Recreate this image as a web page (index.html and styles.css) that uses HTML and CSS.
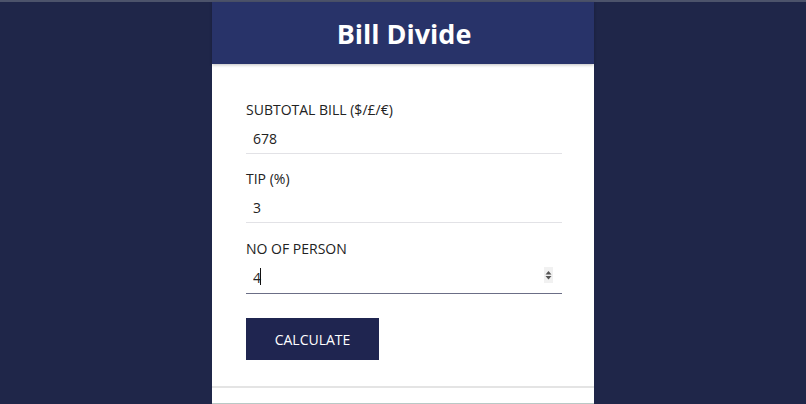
FILE: index.html
```html
<!DOCTYPE html>
<html>
<head>
<meta charset="utf-8">
<link rel="stylesheet" href="styles.css">
</head>
<body>
<div class="topline"></div>
<main class="card">
  <header class="card-head"><h1>Bill Divide</h1></header>
  <form class="card-form">
    <div class="field">
      <label>SUBTOTAL BILL ($/£/€)</label>
      <input class="inp" type="text" value="678">
    </div>
    <div class="field">
      <label>TIP (%)</label>
      <input class="inp" type="text" value="3">
    </div>
    <div class="field field-last">
      <label>NO OF PERSON</label>
      <div class="inp-wrap">
        <input class="inp focused" type="text" value="4">
        <span class="caret"></span>
        <span class="spin">
          <svg width="9" height="16" viewBox="0 0 9 16"><path d="M4.5 4 L7.5 7.5 H1.5 Z" fill="#555"/><path d="M4.5 12.5 L7.5 9 H1.5 Z" fill="#555"/></svg>
        </span>
      </div>
    </div>
    <button type="button" class="btn">CALCULATE</button>
  </form>
  <section class="result"></section>
</main>
</body>
</html>
```
FILE: styles.css
```css
html, body {
  margin: 0;
  padding: 0;
  height: 100%;
}
body {
  background: #1f2649;
  font-family: "Open Sans", "Liberation Sans", sans-serif;
  overflow: hidden;
}
.topline {
  height: 2px;
  background: #4c536b;
}
.card {
  width: 382px;
  margin: 0 auto;
  background: #fff;
  height: 402px;
  display: flex;
  flex-direction: column;
}
.card-head {
  height: 62px;
  background: #283369;
  display: flex;
  align-items: center;
  justify-content: center;
  box-shadow: 0 1px 3px rgba(0,0,0,0.25);
  position: relative;
}
.card-head h1 {
  margin: 0;
  color: #fff;
  font-size: 27px;
  font-weight: 700;
  padding-left: 2px;
}
.card-form {
  padding: 36px 32px 26px 34px;
  display: flex;
  flex-direction: column;
}
.field {
  display: flex;
  flex-direction: column;
  margin-bottom: 15px;
}
.field-last {
  padding-top: 1px;
  margin-bottom: 24px;
}
.field label {
  font-size: 14px;
  line-height: 20px;
  color: #222;
}
.inp-wrap {
  position: relative;
}
.inp {
  box-sizing: border-box;
  width: 100%;
  height: 34px;
  border: none;
  border-bottom: 1px solid #e2e2e6;
  padding: 3px 7px 0;
  font-family: "Open Sans", "Liberation Sans", sans-serif;
  font-size: 14px;
  color: #222;
  outline: none;
  background: transparent;
}
.inp.focused {
  height: 35px;
  border-bottom: 1.5px solid #6b6e86;
}
.caret {
  position: absolute;
  left: 14px;
  top: 9px;
  width: 1px;
  height: 17px;
  background: #111;
}
.spin {
  position: absolute;
  right: 9px;
  top: 8px;
  width: 9px;
  height: 16px;
  background: #f1f1f1;
  display: flex;
  align-items: center;
  justify-content: center;
}
.btn {
  align-self: flex-start;
  width: 133px;
  height: 42px;
  background: #1f2550;
  color: #fff;
  border: none;
  font-family: "Open Sans", "Liberation Sans", sans-serif;
  font-size: 14px;
  cursor: pointer;
}
.result {
  flex: 1;
  border-top: 2px solid #e4e4e4;
  border-bottom: 1px solid #b9c9c6;
}
```
